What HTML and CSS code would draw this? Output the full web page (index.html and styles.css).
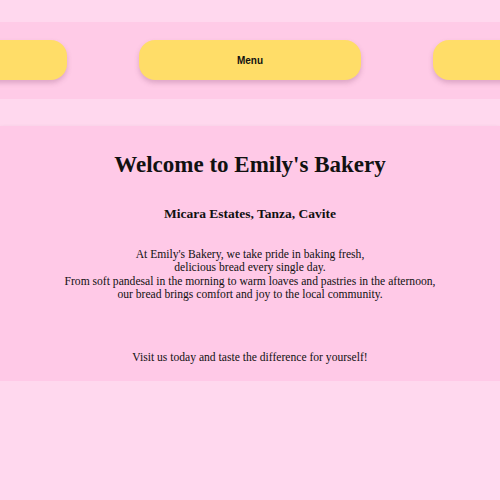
FILE: index.html
```html
<!DOCTYPE html>
<html>
<head>
<meta charset="utf-8">
<link rel="stylesheet" href="styles.css">
</head>
<body>
<nav class="nav">
  <a class="nav-btn" href="#" aria-label="Home"></a>
  <a class="nav-btn" href="#">Menu</a>
  <a class="nav-btn" href="#" aria-label="Contact"></a>
</nav>
<main class="card">
  <h1 class="title">Welcome to Emily's Bakery</h1>
  <h2 class="subtitle">Micara Estates, Tanza, Cavite</h2>
  <p class="text">At Emily's Bakery, we take pride in baking fresh,<br>delicious bread every single day.<br>From soft pandesal in the morning to warm loaves and pastries in the afternoon,<br>our bread brings comfort and joy to the local community.</p>
  <p class="text visit">Visit us today and taste the difference for yourself!</p>
</main>
</body>
</html>
```
FILE: styles.css
```css
html, body {
  margin: 0;
  padding: 0;
  background: #ffd8ee;
  overflow: hidden;
}
.nav {
  margin-top: 22px;
  height: 77px;
  box-sizing: border-box;
  padding-top: 18px;
  background: #ffcbe7;
  display: flex;
  justify-content: center;
  gap: 72px;
  overflow: hidden;
}
.nav-btn {
  flex: 0 0 222px;
  height: 40px;
  background: #ffdd68;
  border-radius: 16px;
  box-shadow: 0 3px 5px rgba(120, 60, 100, 0.25);
  display: flex;
  align-items: center;
  justify-content: center;
  font-family: "Liberation Sans", Arial, sans-serif;
  font-weight: bold;
  font-size: 10px;
  color: #111;
  text-decoration: none;
}
.card {
  margin-top: 27px;
  height: 255px;
  box-sizing: border-box;
  padding-top: 25px;
  background: #ffc9e7;
  box-shadow: 0 3px 5px rgba(0, 0, 0, 0.2);
  text-align: center;
  font-family: "Liberation Serif", "Times New Roman", serif;
  color: #111;
}
.title {
  margin: 0;
  font-size: 23px;
  line-height: 27px;
}
.subtitle {
  margin: 28px 0 0;
  font-size: 13.5px;
  line-height: 16px;
}
.text {
  margin: 26px 0 0;
  font-size: 11.6px;
  line-height: 13.33px;
}
.visit {
  margin-top: 50px;
}
```
